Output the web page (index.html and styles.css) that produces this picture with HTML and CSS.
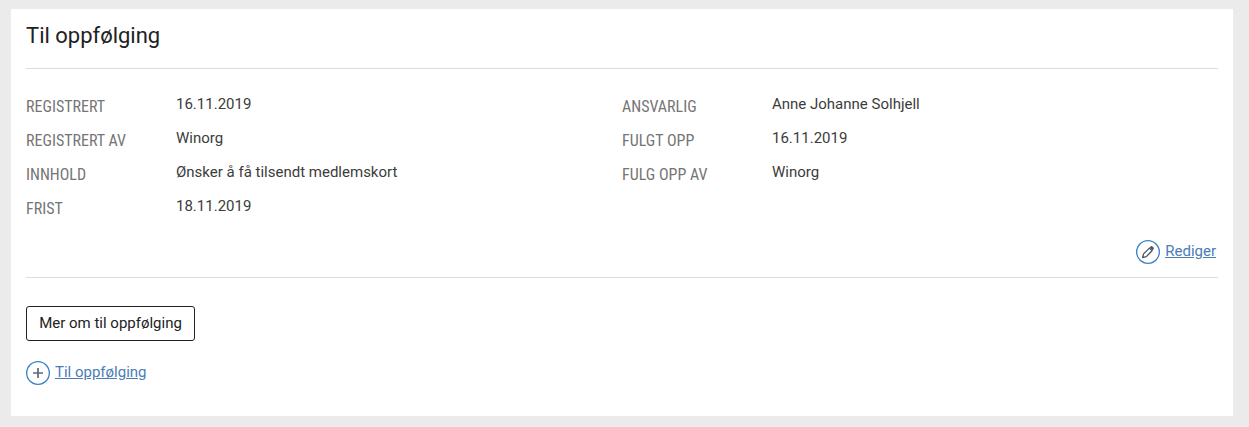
FILE: index.html
```html
<!DOCTYPE html>
<html lang="no">
<head>
<meta charset="utf-8">
<title>Til oppfølging</title>
<link rel="stylesheet" href="styles.css">
</head>
<body>
<section class="card">
  <h2 class="title">Til oppfølging</h2>
  <div class="details">
    <dl class="col col-left">
      <div class="row"><dt>REGISTRERT</dt><dd>16.11.2019</dd></div>
      <div class="row"><dt>REGISTRERT AV</dt><dd>Winorg</dd></div>
      <div class="row"><dt>INNHOLD</dt><dd>Ønsker å få tilsendt medlemskort</dd></div>
      <div class="row"><dt>FRIST</dt><dd>18.11.2019</dd></div>
    </dl>
    <dl class="col col-right">
      <div class="row"><dt>ANSVARLIG</dt><dd>Anne Johanne Solhjell</dd></div>
      <div class="row"><dt>FULGT OPP</dt><dd>16.11.2019</dd></div>
      <div class="row"><dt>FULG OPP AV</dt><dd>Winorg</dd></div>
    </dl>
  </div>
  <div class="edit-bar">
    <a class="icon-link" href="#">
      <svg class="circle-icon" viewBox="0 0 24 24" width="24" height="24" aria-hidden="true">
        <circle cx="12" cy="12" r="11.35" fill="none" stroke="#3b82c4" stroke-width="1.3"/>
        <path d="M6.6 17.6l1-3.7 5.8-5.8 2.7 2.7-5.8 5.8z" fill="none" stroke="#4a5560" stroke-width="1.3" stroke-linejoin="round"/>
        <path d="M13.6 7.4l1-1a1.3 1.3 0 0 1 1.8 0l1.1 1.1a1.3 1.3 0 0 1 0 1.8l-1 1z" fill="#4a5560"/>
      </svg>
      <span>Rediger</span>
    </a>
  </div>
  <div class="actions">
    <button class="btn" type="button">Mer om til oppfølging</button>
    <a class="icon-link" href="#">
      <svg class="circle-icon" viewBox="0 0 24 24" width="24" height="24" aria-hidden="true">
        <circle cx="12" cy="12" r="11.35" fill="none" stroke="#3b82c4" stroke-width="1.3"/>
        <path d="M12 7v10M7 12h10" fill="none" stroke="#5c6b78" stroke-width="1.7"/>
      </svg>
      <span>Til oppfølging</span>
    </a>
  </div>
</section>
</body>
</html>
```
FILE: styles.css
```css
* { box-sizing: border-box; }
html, body { height: 100%; }
body {
  margin: 0;
  padding: 9px 16px 11px 11px;
  background: #ecebec;
  font-family: Roboto, "Liberation Sans", sans-serif;
  color: #333;
  overflow: hidden;
}
.card {
  background: #fff;
  height: 407px;
  padding: 0 15px;
}
.title {
  margin: 0;
  height: 60px;
  border-bottom: 1px solid #dcdcdc;
  font-size: 22px;
  font-weight: 400;
  line-height: 53px;
  color: #212121;
}
.details {
  display: flex;
  padding-top: 22px;
  height: 165px;
}
.col { margin: 0; }
.col-left { width: 596px; }
.col-right { flex: 1; }
.row {
  display: flex;
  height: 34px;
}
.col-left dt { width: 150px; }
.col-right dt { width: 150px; }
dt {
  font-family: "Roboto Condensed", "Liberation Sans Narrow", Roboto, sans-serif;
  font-stretch: condensed;
  font-size: 16px;
  line-height: 24px;
  padding-top: 4px;
  color: #757575;
}
dd {
  margin: 0;
  font-size: 15px;
  line-height: 20px;
  padding-top: 3px;
  color: #3c3c3c;
}
.edit-bar {
  display: flex;
  justify-content: flex-end;
  align-items: flex-start;
  height: 44px;
  padding-right: 2px;
  border-bottom: 1px solid #dcdcdc;
  padding-top: 6px;
}
.actions {
  padding-top: 28px;
  display: flex;
  flex-direction: column;
  align-items: flex-start;
}
.btn {
  height: 35px;
  width: 169px;
  padding: 0 0 2px;
  background: #fff;
  border: 1px solid #222;
  border-radius: 3px;
  font-family: Roboto, sans-serif;
  font-size: 15px;
  color: #222;
}
.actions .icon-link { margin-top: 20px; }
.icon-link {
  display: flex;
  align-items: flex-start;
  gap: 5px;
  font-size: 15px;
  line-height: 20px;
  color: #4a7db5;
}
.icon-link span { text-decoration: underline; padding-top: 1px; }
.circle-icon { display: block; }
```
